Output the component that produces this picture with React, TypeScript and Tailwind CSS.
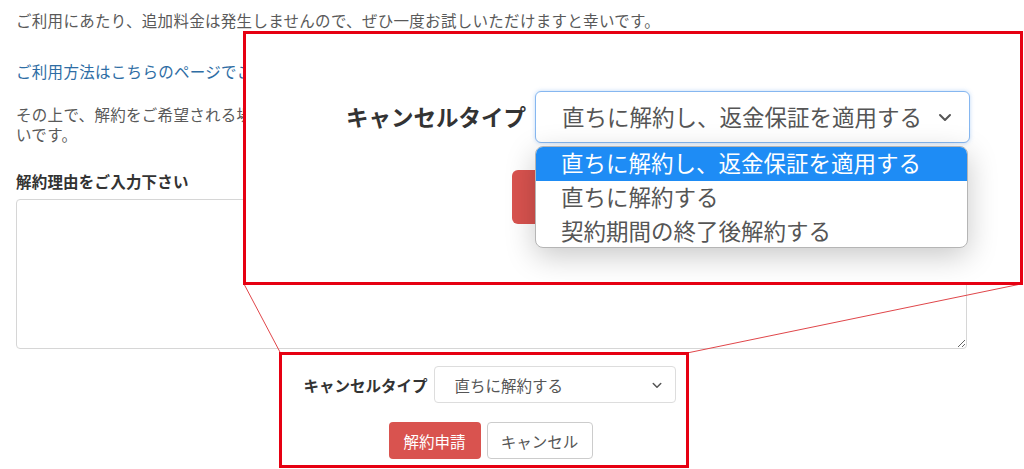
import React from 'react';

const jp = { fontFamily: '"Noto Sans CJK JP", "Noto Sans", sans-serif' };

const Chevron: React.FC<{ size: number; color?: string }> = ({ size, color = '#555' }) => (
  <svg width={size} height={size} viewBox="0 0 16 16" fill="none">
    <polyline points="3,6 8,11 13,6" stroke={color} strokeWidth="2" strokeLinecap="round" strokeLinejoin="round" />
  </svg>
);

const CancelForm: React.FC = () => (
  <div className="flex flex-col items-center w-[951px] mt-[17px]">
    <div className="flex items-center gap-[6px] -translate-x-[2px]">
      <span className="text-[15.5px] font-bold text-[#333]">キャンセルタイプ</span>
      <div className="flex items-center justify-between w-[242px] h-[37px] border border-[#ddd] rounded-[4px] pl-5 pr-3 bg-white">
        <span className="text-[15.5px] text-[#555]">直ちに解約する</span>
        <Chevron size={12} />
      </div>
    </div>
    <div className="flex gap-[6px] mt-[19px] -translate-x-[1px]">
      <button className="w-[92px] h-[37px] rounded-[4px] bg-[#d9534f] text-white text-[15.5px]">解約申請</button>
      <button className="w-[106px] h-[37px] rounded-[4px] bg-white border border-[#ccc] text-[#555] text-[15.5px]">キャンセル</button>
    </div>
  </div>
);

const Callout: React.FC = () => (
  <div className="absolute left-[243px] top-[31px] w-[780px] h-[254px] border-[3px] border-[#e60012] bg-white overflow-hidden">
    {/* cut-off red button behind the dropdown */}
    <div className="absolute left-[266px] top-[136px] w-[110px] h-[54px] rounded-[6px] bg-[#d9534f]" />
    <div className="absolute left-[100px] top-[57px] flex items-center gap-[9px]">
      <span className="text-[22.5px] font-bold text-[#333]">キャンセルタイプ</span>
      <div className="flex items-center justify-between w-[435px] h-[52px] border border-[#86b7f0] rounded-[6px] pl-[26px] pr-4 bg-white shadow-[0_0_4px_rgba(70,140,230,0.35)]">
        <span className="text-[22.5px] text-[#555]">直ちに解約し、返金保証を適用する</span>
        <Chevron size={16} />
      </div>
    </div>
    <div className="absolute left-[289px] top-[112px] w-[433px] h-[102px] bg-white border border-[#b5b5b5] rounded-[8px] overflow-hidden shadow-[0_8px_30px_rgba(0,0,0,0.22)]">
      <div className="h-[34px] bg-[#1e8cf5] text-white text-[22.5px] leading-[30px] pl-[25px]">直ちに解約し、返金保証を適用する</div>
      <div className="h-[34px] text-[#555] text-[22.5px] leading-[30px] pl-[25px]">直ちに解約する</div>
      <div className="h-[34px] text-[#555] text-[22.5px] leading-[30px] pl-[25px]">契約期間の終了後解約する</div>
    </div>
  </div>
);

export default function App() {
  return (
    <div className="relative w-[1024px] h-[469px] bg-white overflow-hidden" style={jp}>
      <div className="pl-4 pt-[10px] text-[15.5px] text-[#595959] leading-[20px]">
        <p className="tracking-[0.3px]">ご利用にあたり、追加料金は発生しませんので、ぜひ一度お試しいただけますと幸いです。</p>
        <p className="mt-[31px] text-[#2e6da4] tracking-[0.3px]">ご利用方法はこちらのページでご確認ください。</p>
        <p className="mt-[23px] w-[951px] tracking-[0.3px]">
          その上で、解約をご希望される場合は下記フォームより解約理由とキャンセルタイプをご選択の上、お手続きいただけますと幸
          <br />
          いです。
        </p>
        <p className="mt-[27px] font-bold text-[#333] tracking-[0.2px]">解約理由をご入力下さい</p>
        <textarea className="block mt-[8px] w-[951px] h-[150px] border border-[#d6d6d6] rounded-[4px] resize-y bg-white" />
        <CancelForm />
      </div>

      <svg className="absolute inset-0 pointer-events-none" width="1024" height="469">
        <line x1="244" y1="284" x2="281" y2="354" stroke="#e0464a" strokeWidth="1" />
        <line x1="1021" y1="284" x2="687" y2="353" stroke="#e0464a" strokeWidth="1" />
      </svg>
      <Callout />
      <div className="absolute left-[279px] top-[352px] w-[410px] h-[116px] border-[3px] border-[#e60012] pointer-events-none" />
    </div>
  );
}
